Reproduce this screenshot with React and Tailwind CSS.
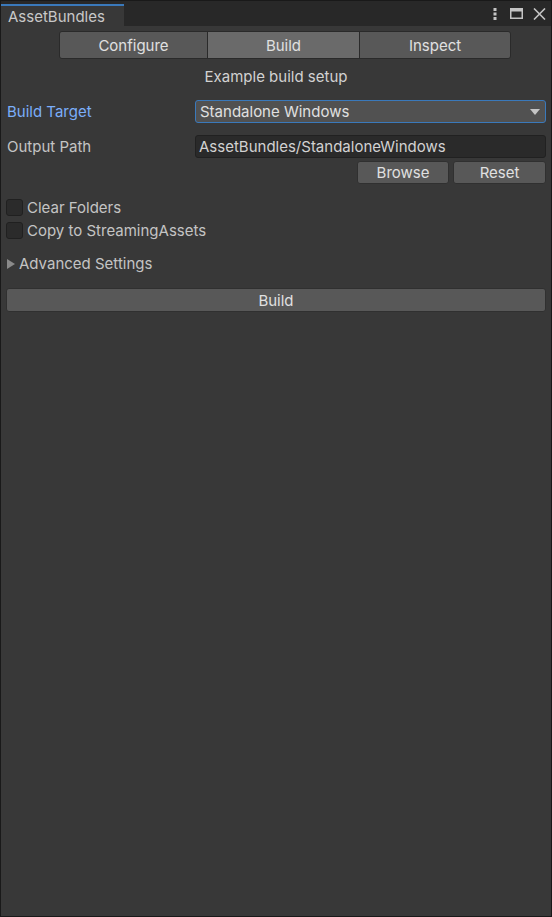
import React, { useState } from "react";

const Checkbox = ({ label }) => (
  <div className="flex h-[17px] items-center">
    <div className="h-[17px] w-[17px] rounded-[3px] border border-[#202020] bg-[#2b2b2b]" />
    <span className="ml-[4px] text-[#c4c4c4]">{label}</span>
  </div>
);

const App = () => {
  const [tab, setTab] = useState("Build");
  const tabs = ["Configure", "Build", "Inspect"];

  return (
    <div
      className="flex h-[917px] w-[552px] flex-col border border-[#191919] bg-[#383838] text-[15px] leading-none text-[#c4c4c4]"
      style={{ fontFamily: "Inter, 'Noto Sans', sans-serif" }}
    >
      {/* title bar */}
      <div className="flex h-[25px] items-end bg-[#282828]">
        <div className="flex h-[22px] w-[123px] items-center border-t-2 border-[#3a79bb] bg-[#383838] pl-[7px] text-[#c8c8c8]">
          AssetBundles
        </div>
        <div className="ml-auto flex h-full items-center pr-[5px]">
          <svg width="4" height="12" viewBox="0 0 4 12">
            <rect x="0.5" y="0" width="3" height="3" fill="#c4c4c4" />
            <rect x="0.5" y="4.5" width="3" height="3" fill="#c4c4c4" />
            <rect x="0.5" y="9" width="3" height="3" fill="#c4c4c4" />
          </svg>
          <svg width="13" height="11" viewBox="0 0 13 11" className="ml-[13px]">
            <rect x="0.75" y="0.75" width="11.5" height="9.5" fill="none" stroke="#c4c4c4" strokeWidth="1.5" />
            <rect x="0" y="0" width="13" height="3.5" fill="#c4c4c4" />
          </svg>
          <svg width="13" height="12" viewBox="0 0 13 12" className="ml-[10px]">
            <path d="M1 0.5 L12 11.5 M12 0.5 L1 11.5" stroke="#c4c4c4" strokeWidth="1.6" />
          </svg>
        </div>
      </div>

      <div className="flex flex-col px-[5px]">
        {/* toolbar */}
        <div className="mt-[5px] flex pl-[53px]">
          <div className="flex h-[28px] overflow-hidden rounded-[3px] border border-[#2a2a2a]">
            {tabs.map((t, i) => (
              <button
                key={t}
                onClick={() => setTab(t)}
                className={
                  "flex items-center justify-center text-[#e0e0e0] " +
                  (i === 0 ? "w-[147px] " : i === 1 ? "w-[153px] border-x border-[#2a2a2a] " : "w-[150px] ") +
                  (tab === t ? "bg-[#6a6a6a]" : "bg-[#585858]")
                }
              >
                {t}
              </button>
            ))}
          </div>
        </div>

        <div className="flex h-[34px] items-center justify-center text-[#d2d2d2]">Example build setup</div>

        {/* build target */}
        <div className="mt-[7px] flex h-[23px] items-center">
          <span className="w-[189px] pl-px text-[#7baefa]">Build Target</span>
          <div className="flex h-[23px] flex-1 items-center justify-between rounded-[3px] border border-[#3a79bb] bg-[#515151] px-[4px] text-[#e0e0e0]">
            <span>Standalone Windows</span>
            <svg width="10" height="6" viewBox="0 0 10 6" className="mr-[1px]">
              <path d="M0 0 L10 0 L5 6 Z" fill="#c4c4c4" />
            </svg>
          </div>
        </div>

        {/* output path */}
        <div className="mt-[12px] flex h-[23px] items-center">
          <span className="w-[189px] pl-px">Output Path</span>
          <div className="flex h-[23px] flex-1 items-center rounded-[3px] border border-[#212121] bg-[#2a2a2a] px-[3px] text-[#d2d2d2]">
            AssetBundles/StandaloneWindows
          </div>
        </div>

        <div className="mt-[3px] flex justify-end gap-[4px]">
          <button className="h-[23px] w-[92px] rounded-[3px] border border-[#303030] bg-[#585858] text-[#e0e0e0]">Browse</button>
          <button className="h-[23px] w-[93px] rounded-[3px] border border-[#303030] bg-[#585858] text-[#e0e0e0]">Reset</button>
        </div>

        <div className="mt-[15px] flex flex-col gap-[6px]">
          <Checkbox label="Clear Folders" />
          <Checkbox label="Copy to StreamingAssets" />
        </div>

        <div className="mt-[13px] flex h-[23px] items-center">
          <svg width="8" height="10" viewBox="0 0 8 10" className="ml-px">
            <path d="M0 0 L8 5 L0 10 Z" fill="#8a8a8a" />
          </svg>
          <span className="ml-[4px]">Advanced Settings</span>
        </div>

        <button className="mt-[13px] h-[24px] w-full rounded-[3px] border border-[#303030] bg-[#585858] text-[#e0e0e0]">Build</button>
      </div>
    </div>
  );
};

export default App;
